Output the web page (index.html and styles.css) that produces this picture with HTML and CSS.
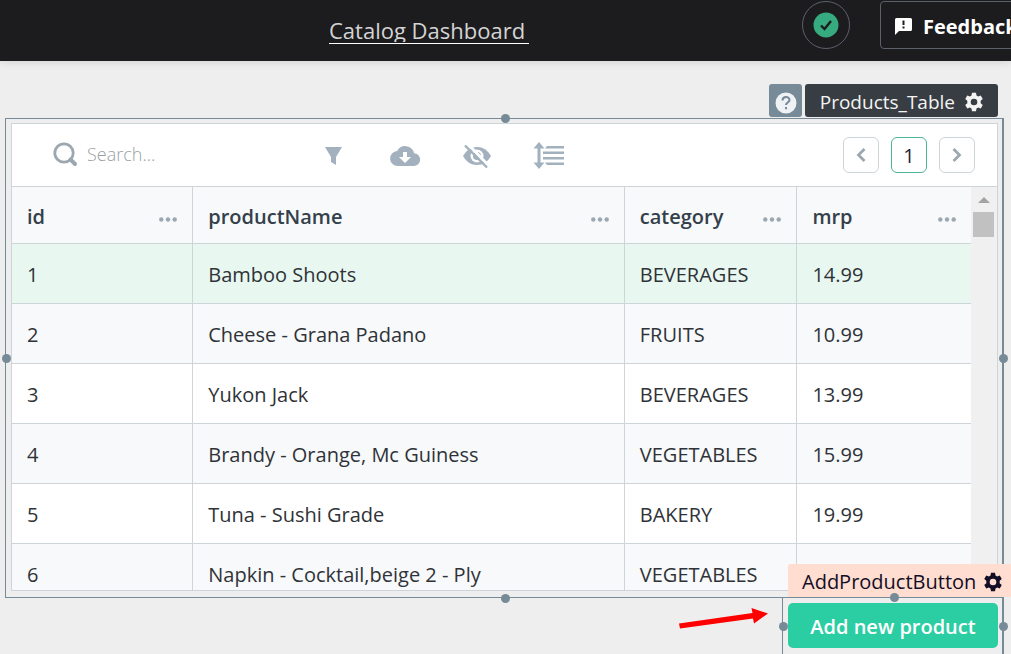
FILE: index.html
```html
<!DOCTYPE html>
<html lang="en">
<head>
<meta charset="utf-8">
<meta name="viewport" content="width=device-width, initial-scale=1">
<title>Catalog Dashboard</title>
<link rel="stylesheet" href="styles.css">
</head>
<body>
<svg class="defs" aria-hidden="true">
  <symbol id="cog" viewBox="0 0 24 24"><path fill-rule="evenodd" d="M9.6 1h4.8l.6 3.2 2 1.100 3.100-1.100 2.400 4.200-2.500 2.100v3l2.500 2.100-2.400 4.200-3.100-1.100-2 1.100-.6 3.200H9.600L9 19.800l-2-1.100-3.100 1.100-2.400-4.200L4 13.500v-3L1.500 8.400l2.400-4.200L7 5.300l2-1.100zM12 8a4 4 0 1 0 0 8 4 4 0 0 0 0-8z"/></symbol>
  <symbol id="dots" viewBox="0 0 18 5"><circle cx="2.300" cy="2.500" r="2.200"/><circle cx="9" cy="2.500" r="2.200"/><circle cx="15.700" cy="2.500" r="2.200"/></symbol>
</svg>
<header class="topbar">
  <h1 class="title"><span class="title-text">Catalog Dashboard</span></h1>
  <div class="actions">
    <button class="status" aria-label="Saved">
      <svg width="26" height="26" viewBox="0 0 26 26"><circle cx="13" cy="13" r="12.500" fill="#36ab80"/><path d="M8 13.500l3.500 3.500L18 9" fill="none" stroke="#1c1c1e" stroke-width="2.400"/></svg>
    </button>
    <button class="feedback">
      <svg width="17" height="17" viewBox="0 0 17 17"><path fill="#fff" fill-rule="evenodd" d="M1.500 0h14A1.500 1.500 0 0 1 17 1.500v10a1.500 1.500 0 0 1-1.500 1.500H4l-4 4V1.500A1.500 1.500 0 0 1 1.500 0zM7.500 2.500V7h2V2.500zM7.500 8.500v2h2v-2z"/></svg>
      <span>Feedback</span>
    </button>
  </div>
</header>
<main class="canvas">
  <div class="tags">
    <button class="tag help" aria-label="Help">
      <svg width="22" height="22" viewBox="0 0 22 22"><circle cx="11" cy="11" r="10.500" fill="#eef2f4"/><path d="M7.500 8.500c0-4.500 7-4.500 7-.500 0 2.500-3.500 2.500-3.500 5" fill="none" stroke="#768a97" stroke-width="2"/><rect x="10" y="15" width="2" height="2.200" fill="#768a97"/></svg>
    </button>
    <button class="tag name"><span>Products_Table</span><svg class="cog" width="20" height="20"><use href="#cog"/></svg></button>
  </div>
  <section class="frame">
    <i class="handle top"></i><i class="handle left"></i><i class="handle right"></i><i class="handle bottom"></i>
    <div class="widget">
      <div class="toolbar">
        <label class="search">
          <svg width="25" height="25" viewBox="0 0 25 25" fill="none" stroke="#9ba8b1"><title>Search</title><circle cx="11" cy="11" r="9.200" stroke-width="2.800"/><path d="M17.500 17.500l4.500 4.500" stroke-width="4" stroke-linecap="round"/></svg>
          <input type="text" placeholder="Search...">
        </label>
        <div class="tools">
          <button aria-label="Filter"><svg width="32" height="28" viewBox="0 0 32 28"><path d="M8 5h17l-6 10v8l-5-3v-5z"/></svg></button>
          <button aria-label="Download"><svg width="32" height="28" viewBox="0 0 32 28"><path fill-rule="evenodd" d="M9 24a7.500 7.500 0 0 1-.8-15A9 9 0 0 1 25 11.200 6.400 6.400 0 0 1 24.600 24zM14 10v5h-4l6 6 6-6h-4v-5z"/></svg></button>
          <button aria-label="Hide fields"><svg width="32" height="28" viewBox="0 0 32 28"><path d="M2 14Q7 5 16 5t14 9q-5 9-14 9T2 14z"/><circle cx="16" cy="14" r="6.500" fill="#fff"/><circle cx="16" cy="14" r="4"/><path d="M6 1l22 23" stroke="#fff" stroke-width="3"/><path d="M4 3.500L26 25.500" stroke="#a2b1bd" stroke-width="2.400"/></svg></button>
          <button aria-label="Row height"><svg width="32" height="28" viewBox="0 0 32 28"><path d="M6 0l5.500 6.500h-4v14h4L6 27 .500 20.500h4v-14h-4zM14 4h17v2.500H12zM10 9.500h21V12H10zM10 15h21v2.500H10zM12 20.500h19V23H14z"/></svg></button>
        </div>
        <nav class="pager" aria-label="Pages">
          <button aria-label="Previous page"><svg width="10" height="16" viewBox="0 0 10 16"><path d="M8.500 2L2.500 8l6 6"/></svg></button>
          <button class="current" aria-current="page">1</button>
          <button aria-label="Next page"><svg width="10" height="16" viewBox="0 0 10 16"><path d="M1.500 2l6 6-6 6"/></svg></button>
        </nav>
      </div>
      <div class="grid">
        <div class="scroller">
          <table>
            <colgroup><col class="c-id"><col class="c-name"><col class="c-cat"><col class="c-mrp"></colgroup>
            <thead>
              <tr>
                <th><div class="head">id<button aria-label="id menu"><svg width="18" height="5"><use href="#dots"/></svg></button></div></th>
                <th><div class="head">productName<button aria-label="productName menu"><svg width="18" height="5"><use href="#dots"/></svg></button></div></th>
                <th><div class="head">category<button aria-label="category menu"><svg width="18" height="5"><use href="#dots"/></svg></button></div></th>
                <th><div class="head">mrp<button aria-label="mrp menu"><svg width="18" height="5"><use href="#dots"/></svg></button></div></th>
              </tr>
            </thead>
            <tbody>
              <tr class="selected"><td>1</td><td>Bamboo Shoots</td><td>BEVERAGES</td><td>14.99</td></tr>
              <tr><td>2</td><td>Cheese - Grana Padano</td><td>FRUITS</td><td>10.99</td></tr>
              <tr><td>3</td><td>Yukon Jack</td><td>BEVERAGES</td><td>13.99</td></tr>
              <tr><td>4</td><td>Brandy - Orange, Mc Guiness</td><td>VEGETABLES</td><td>15.99</td></tr>
              <tr><td>5</td><td>Tuna - Sushi Grade</td><td>BAKERY</td><td>19.99</td></tr>
              <tr><td>6</td><td>Napkin - Cocktail,beige 2 - Ply</td><td>VEGETABLES</td><td></td></tr>
            </tbody>
          </table>
        </div>
        <div class="scrollbar"><svg width="12" height="6" viewBox="0 0 12 6"><path d="M0 6l6-6 6 6z" fill="#a3a3a3"/></svg><div class="thumb"></div></div>
      </div>
    </div>
  </section>
  <section class="frame add-frame">
    <button class="tag add-tag"><span>AddProductButton</span><svg class="cog" width="20" height="20"><use href="#cog"/></svg></button>
    <i class="handle top"></i><i class="handle left"></i><i class="handle right"></i>
    <svg class="arrow" width="90" height="22" viewBox="0 0 90 22"><path fill="#f00" d="M0 16.500L73.500 6 72.500 1 89 6.500 75 16.500 74 11.500 1 21.500z"/></svg>
    <button class="add">Add new product</button>
  </section>
</main>
</body>
</html>
```
FILE: styles.css
```css
* { box-sizing: border-box; }
body {
  margin: 0;
  height: 100vh;
  display: flex;
  flex-direction: column;
  overflow: hidden;
  background: #eeeeee;
  color: #2f3337;
  font-family: "Open Sans", "Noto Sans", sans-serif;
  font-size: 20px;
}
button { font: inherit; color: inherit; padding: 0; border: 0; background: none; }
svg { display: block; flex: none; }
.defs { position: absolute; width: 0; height: 0; }

.topbar {
  flex: none;
  display: flex;
  justify-content: space-between;
  height: 61px;
  padding-left: 329px;
  background: #1c1c1e;
  box-shadow: 0 1px 8px rgba(0, 0, 0, 0.12);
}
.title {
  align-self: flex-start;
  margin: 16px 0 0;
  padding-bottom: 1px;
  border-bottom: 1px solid #fff;
  color: #d4d4d4;
  font-size: 22px;
  font-weight: 400;
}
.title-text { display: block; height: 26px; padding-right: 4px; line-height: 28px; overflow: hidden; }
.actions { display: flex; gap: 30px; width: 209px; padding-top: 1px; }
.status {
  flex: none;
  display: grid;
  place-items: center;
  width: 48px;
  height: 48px;
  border: 1px solid #5b606b;
  border-radius: 50%;
}
.feedback {
  flex: none;
  display: flex;
  align-items: center;
  gap: 11px;
  height: 48px;
  padding: 2px 14px 0;
  border: 1px solid #5b606b;
  border-radius: 4px;
  color: #fff;
  font-weight: 700;
}

.canvas { flex: 1; min-height: 0; display: flex; flex-direction: column; padding: 23px 7px 0 5px; }
.tags { flex: none; display: flex; justify-content: flex-end; gap: 3px; padding: 0 6px 1px 0; }
.tag { display: flex; align-items: center; gap: 7px; height: 33px; padding: 2px 14px 0; border-radius: 3px 3px 0 0; font-size: 20px; }
.help { padding: 4px 5px 0 6px; background: #768a97; border-radius: 3px; }
.name { gap: 9px; padding-left: 15px; background: #373d42; color: #f4f4f4; border-radius: 3px; font-size: 19px; }
.cog { fill: currentColor; }

.frame {
  position: relative;
  flex: 1;
  min-height: 0;
  display: flex;
  padding: 4px 4px 6px 5px;
  border: 1px solid #768a97;
  border-right-width: 2px;
}
.handle { position: absolute; z-index: 2; width: 9px; height: 9px; border-radius: 50%; background: #768a97; }
.handle.top { top: -5px; left: calc(50% - 3px); }
.handle.bottom { bottom: -6px; left: calc(50% - 3px); }
.handle.left { left: -4px; top: calc(50% - 4px); }
.handle.right { right: -6px; top: calc(50% - 4px); }

.widget { flex: 1; min-width: 0; display: flex; flex-direction: column; border: 1px solid #cdd5d9; background: #fff; }
.toolbar { flex: none; display: flex; align-items: center; justify-content: space-between; height: 63px; padding: 0 22px 0 41px; border-bottom: 1px solid #cdd5d9; }
.search { display: flex; align-items: center; gap: 9px; width: 264px; padding-bottom: 2px; }
.search input { flex: 1; min-width: 0; height: 32px; padding: 0; border: 0; outline: 0; background: none; font: inherit; font-size: 18px; font-weight: 300; }
.search input::placeholder { color: #9a9fa3; opacity: 1; }
.tools { display: flex; gap: 40px; margin-right: auto; padding-top: 1px; }
.tools svg { fill: #a2b1bd; }
.pager { display: flex; gap: 12px; }
.pager button { display: grid; place-items: center; width: 36px; height: 36px; border: 1px solid #cdd5d9; border-radius: 6px; }
.pager .current { border-color: #4bb597; color: #2b2438; }
.pager svg { fill: none; stroke: #9ba8b1; stroke-width: 2.800; }

.grid { flex: 1; min-height: 0; display: flex; }
.scroller { flex: 1; min-width: 0; overflow: hidden; }
table { width: 100%; table-layout: fixed; border-collapse: separate; border-spacing: 0; }
.c-id { width: 18.900%; }
.c-name { width: 45%; }
.c-cat { width: 18%; }
th, td { height: 60px; padding: 2px 15px 0; text-align: left; border-right: 1px solid #cdd5d9; border-bottom: 1px solid #cdd5d9; white-space: nowrap; }
th:last-child, td:last-child { border-right: 0; }
th { height: 57px; background: #f7f9fb; color: #34404a; font-weight: 600; }
.head { display: flex; align-items: center; justify-content: space-between; }
.head button { padding-top: 7px; }
.head svg { fill: #9ba8b1; }
tr:nth-child(even) td { background: #f7f9fb; }
.selected td { background: #e8f8f1; }
.scrollbar { flex: none; display: flex; flex-direction: column; align-items: center; gap: 9px; width: 26px; padding: 10px 1px 0 0; background: #f0f0f0; }
.thumb { width: 21px; height: 25px; background: #c1c1c1; }

.add-frame { flex: none; align-self: flex-end; width: 222px; padding: 5px 4px 6px 5px; border-top: 0; border-bottom: 0; }
.add-tag { position: absolute; top: -34px; left: 5px; z-index: 1; padding-right: 20px; background: #ffddd0; color: #120e25; }
.arrow { position: absolute; left: -104px; top: 9px; }
.add { flex: 1; height: 45px; padding-top: 2px; border-radius: 5px; background: #2bcda3; color: #fff; font-weight: 600; }
```
